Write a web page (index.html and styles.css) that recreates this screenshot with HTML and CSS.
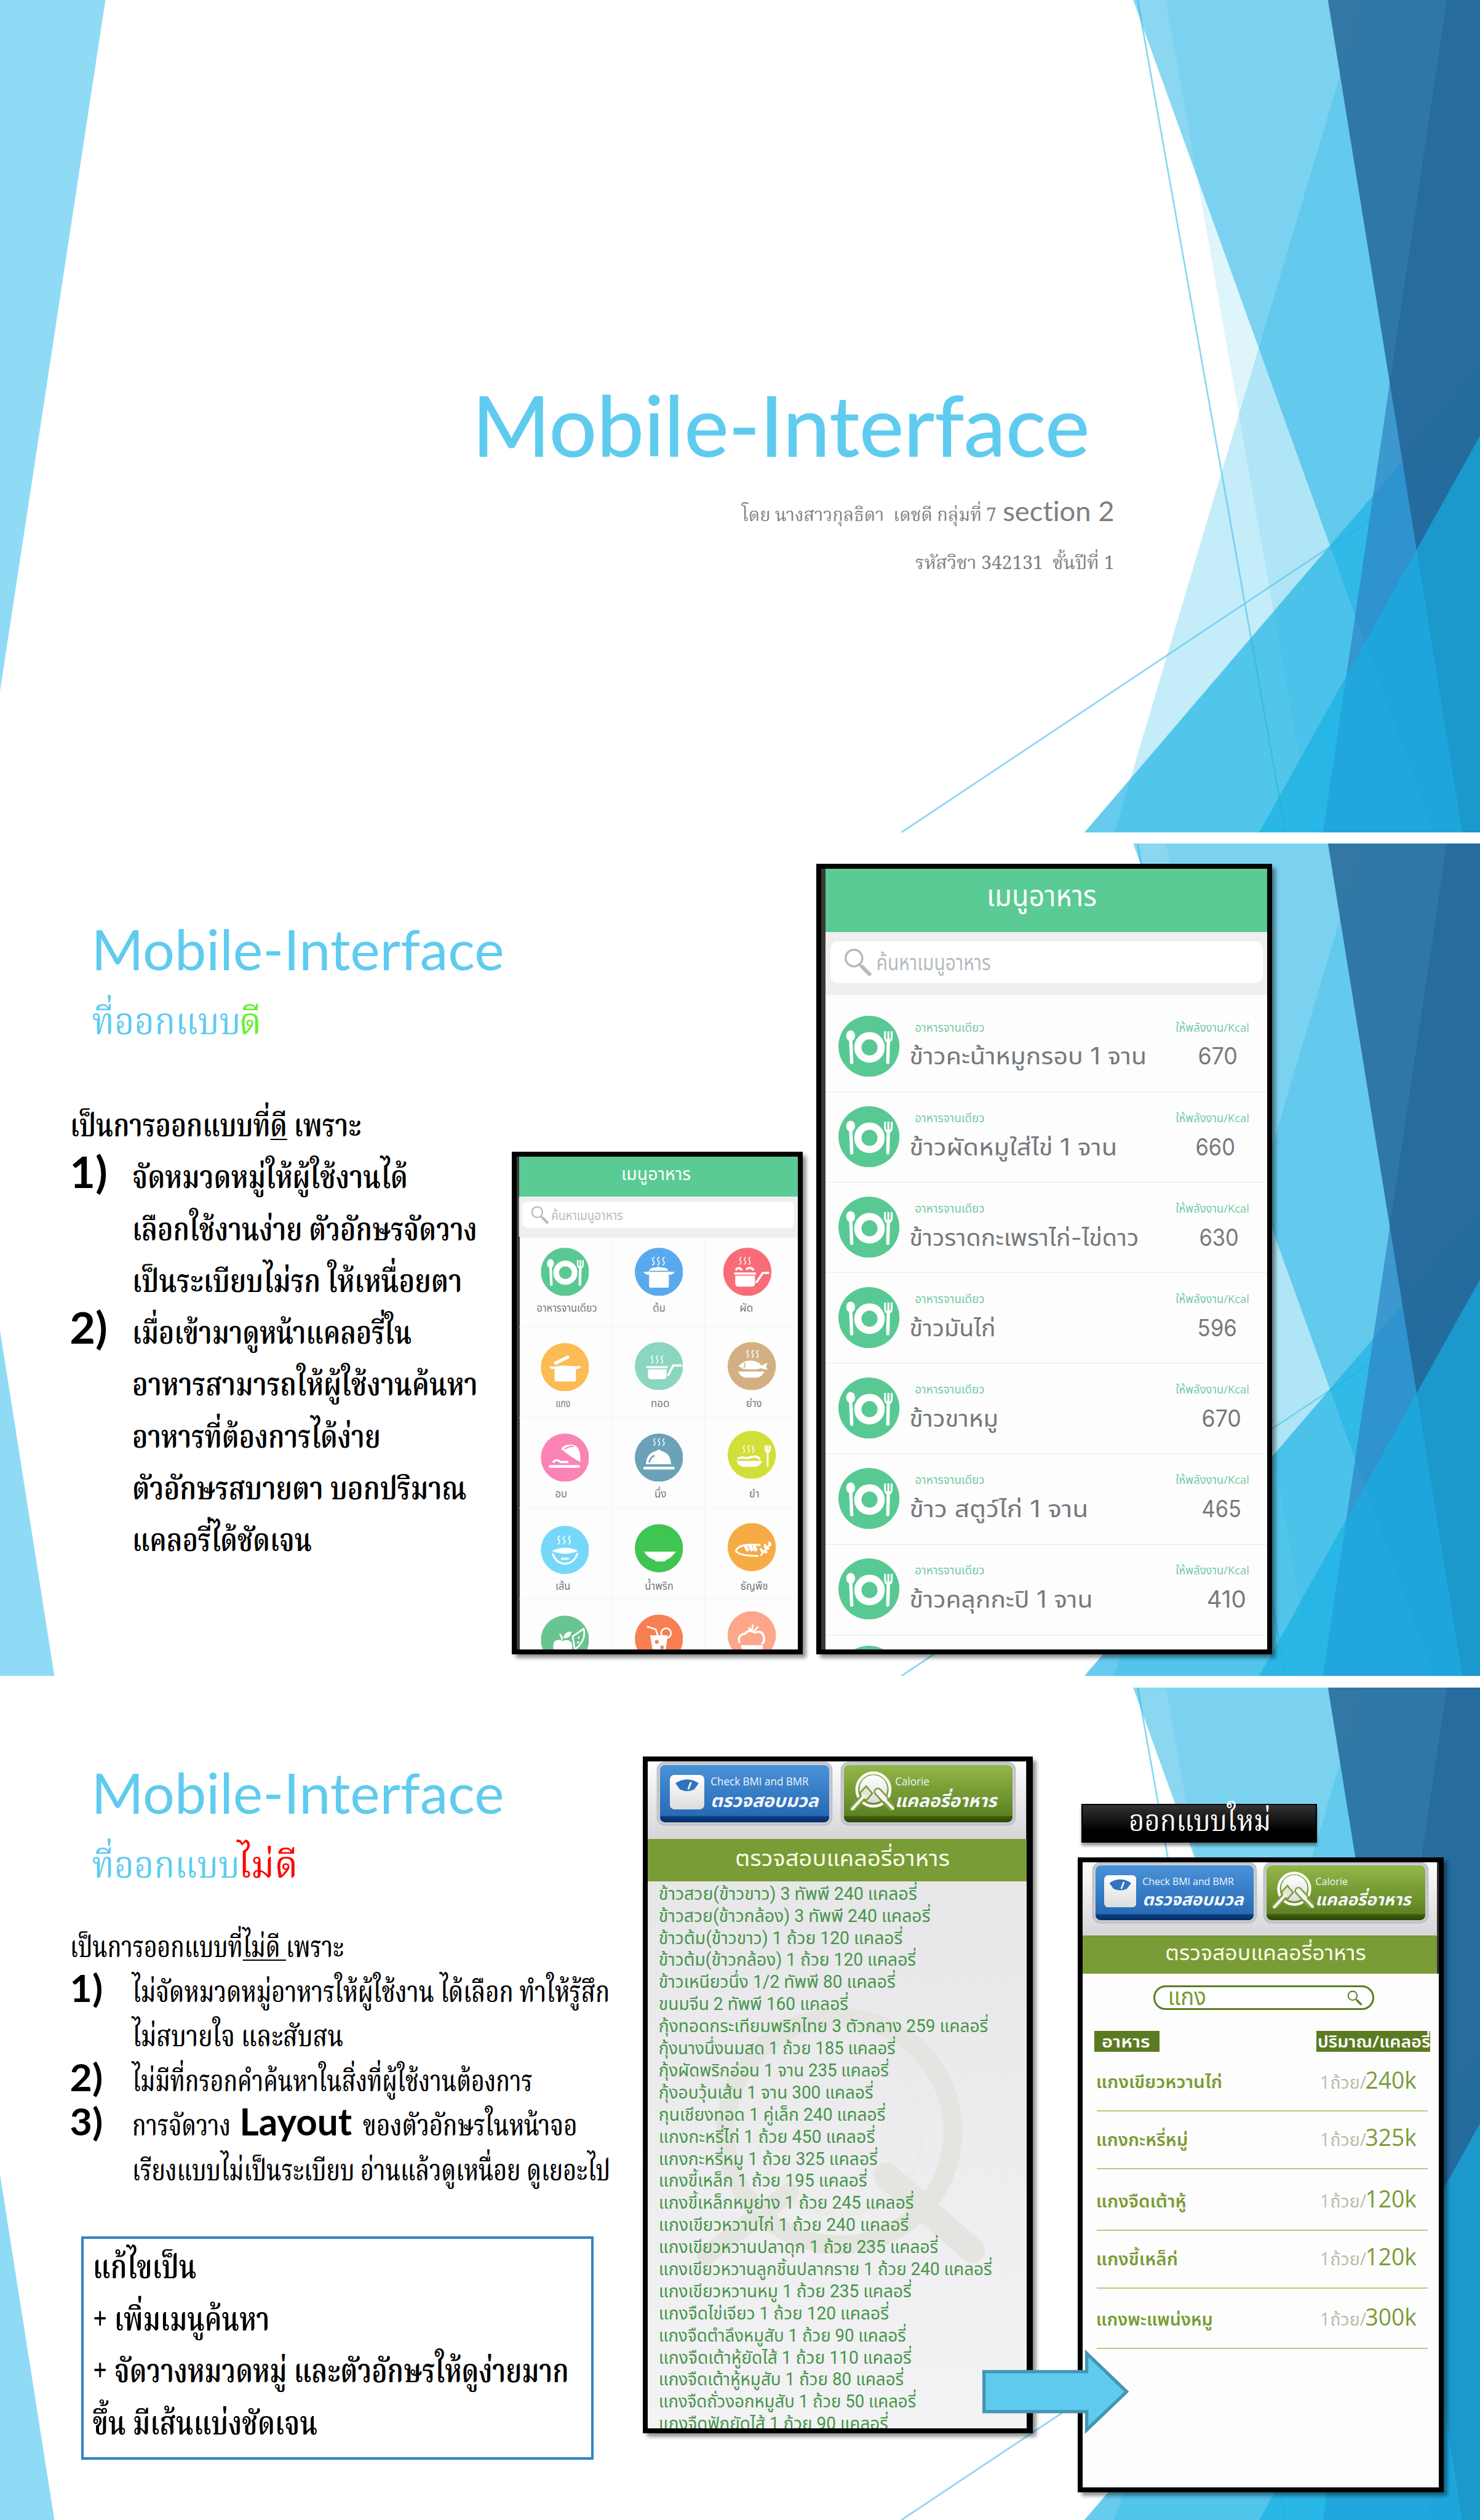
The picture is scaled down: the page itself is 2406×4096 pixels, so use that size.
FILE: index.html
```html
<!DOCTYPE html>
<html lang="th">
<head>
<meta charset="utf-8">
<title>Mobile-Interface</title>
<link rel="stylesheet" href="styles.css">
</head>
<body>
<svg class="defs" width="0" height="0" aria-hidden="true">
  <defs>
    <linearGradient id="gWhite" x1="0" y1="0" x2="0" y2="1"><stop offset="0" stop-color="#fff"/><stop offset="1" stop-color="#dcdcdc"/></linearGradient>
    <symbol id="facets" viewBox="0 0 2667 1500" preserveAspectRatio="none">
      <path d="M2050 0L2316.6 1500M1624 1500L2667 805" stroke="#5fcbef" stroke-opacity=".75" stroke-width="3" fill="none"/>
      <path d="M2455 0H2667V1500H2008Z" fill="#5fcbef" fill-opacity=".36"/>
      <path d="M2101 0H2667V1500H2365Z" fill="#5fcbef" fill-opacity=".2"/>
      <path d="M2667 667V1500H1954Z" fill="#17b0e4" fill-opacity=".66"/>
      <path d="M2042 0H2667V1500H2583Z" fill="#17b0e4" fill-opacity=".5"/>
      <path d="M2607 0H2667V1500H2384Z" fill="#2e83c3" fill-opacity=".7"/>
      <path d="M2393 0H2667V1500H2635Z" fill="#226292" fill-opacity=".8"/>
      <path d="M2667 785V1500H2269Z" fill="#17b0e4" fill-opacity=".66"/>
    </symbol>
    <symbol id="plate" viewBox="0 0 110 110">
      <circle cx="55" cy="55" r="55" fill="#58c993"/>
      <circle cx="56" cy="57" r="21" fill="none" stroke="#fff" stroke-width="13"/>
      <ellipse cx="22" cy="36" rx="8" ry="10" fill="#fff"/>
      <path d="M22 40L24 84" stroke="#fff" stroke-width="6" stroke-linecap="round"/>
      <path d="M84 28V38Q84 46 90 46Q96 46 96 38V28M90 28V46" stroke="#fff" stroke-width="3.5" fill="none"/>
      <path d="M90 44L89 84" stroke="#fff" stroke-width="6" stroke-linecap="round"/>
    </symbol>
    <symbol id="mag" viewBox="0 0 50 50">
      <circle cx="18" cy="18" r="15" fill="none" stroke="currentColor" stroke-width="4"/>
      <path d="M28 30L33 34" stroke="currentColor" stroke-width="4"/>
      <path d="M33 34L46 47" stroke="currentColor" stroke-width="7" stroke-linecap="round"/>
    </symbol>
    <symbol id="steam" viewBox="0 0 30 18">
      <path d="M6 1Q0 5 4 9T2 17M16 1Q10 5 14 9T12 17M26 1Q20 5 24 9T22 17" fill="none" stroke="#fff" stroke-width="2"/>
    </symbol>
    <symbol id="scale" viewBox="0 0 62 62">
      <rect width="62" height="62" rx="8" fill="url(#gWhite)"/>
      <path d="M10 15Q31 1 52 15L44 26Q31 32 18 26Z" fill="#2f74bd"/>
      <path d="M33 26L38 13" stroke="#fff" stroke-width="3"/>
    </symbol>
    <symbol id="dish" viewBox="0 0 80 72">
      <circle cx="42" cy="34" r="30" fill="none" stroke="#fff" stroke-width="5"/>
      <circle cx="42" cy="33" r="25" fill="url(#gWhite)"/>
      <path d="M4 69L25 46" stroke="#7d9c3c" stroke-width="12" stroke-linecap="round"/>
      <path d="M18 40L29 28L40 41L30 53L20 50Z" fill="#e3e6d4" stroke="#7d9c3c" stroke-width="3"/>
      <path d="M50 38L77 68" stroke="#7d9c3c" stroke-width="15" stroke-linecap="round"/>
      <path d="M4 69L25 46" stroke="#f4f4ee" stroke-width="5" stroke-linecap="round"/>
      <path d="M50 38L62 51" stroke="#f4f4ee" stroke-width="9" stroke-linecap="round"/>
      <path d="M60 50L77 68" stroke="#f4f4ee" stroke-width="5" stroke-linecap="round"/>
    </symbol>
  </defs>
</svg>

<main class="deck">
  <section class="slide cover">
    <svg class="bg"><use href="#facets"/><path d="M0 0H190L0 1245Z" fill="#8fdbf5"/></svg>
    <h1><span data-w="1105">Mobile-Interface</span></h1>
    <p class="by"><span class="th" data-w="456">โดย นางสาวกุลธิดา&nbsp; เดชดี กลุ่มที่ 7</span><span class="sec" data-w="197">section 2</span></p>
    <p class="by"><span class="th" data-w="356">รหัสวิชา 342131&nbsp; ชั้นปีที่ 1</span></p>
  </section>

  <section class="slide good">
    <svg class="bg"><use href="#facets"/><path d="M0 877L98 1500H0Z" fill="#8fdbf5"/></svg>
    <div class="copy">
      <h2><span data-w="736">Mobile-Interface</span></h2>
      <h2><span class="th" data-w="263">ที่ออกแบบ</span><span class="th lime" data-w="35">ดี</span></h2>
      <div class="body">
        <p class="ln"><span class="th" data-w="520">เป็นการออกแบบที่<u>ดี</u> เพราะ</span></p>
        <div class="item"><b data-w="62">1)</b><div>
          <p class="ln"><span class="th" data-w="492">จัดหมวดหมู่ให้ผู้ใช้งานได้</span></p>
          <p class="ln"><span class="th" data-w="617">เลือกใช้งานง่าย ตัวอักษรจัดวาง</span></p>
          <p class="ln"><span class="th" data-w="590">เป็นระเบียบไม่รก ให้เหนื่อยตา</span></p></div></div>
        <div class="item"><b data-w="62">2)</b><div>
          <p class="ln"><span class="th" data-w="499">เมื่อเข้ามาดูหน้าแคลอรี่ใน</span></p>
          <p class="ln"><span class="th" data-w="618">อาหารสามารถให้ผู้ใช้งานค้นหา</span></p>
          <p class="ln"><span class="th" data-w="443">อาหารที่ต้องการได้ง่าย</span></p>
          <p class="ln"><span class="th" data-w="598">ตัวอักษรสบายตา บอกปริมาณ</span></p>
          <p class="ln"><span class="th" data-w="319">แคลอรี่ได้ชัดเจน</span></p></div></div>
      </div>
    </div>

    <div class="phone menu">
      <header><span class="th" data-w="123">เมนูอาหาร</span></header>
      <div class="find"><div class="field"><svg><use href="#mag"/></svg><span class="th" data-w="127">ค้นหาเมนูอาหาร</span></div></div>
      <div class="cats">
        <div class="cat"><svg viewBox="0 0 110 110"><use href="#plate"/></svg><p style="--x:7px"><span data-w="107">อาหารจานเดียว</span></p></div>
        <div class="cat"><svg viewBox="0 0 88 88"><circle cx="44" cy="44" r="44" fill="#5aa9ee"/><use href="#steam" x="30" y="16" width="28" height="17"/><path d="M15 44H25L27 40Q29 36 40 36Q42 33 46 36Q58 36 60 40L62 44H73L68 49H62V70Q62 73 59 73H29Q26 73 26 70V49H21Z" fill="#fff"/><path d="M27 43H61" stroke="#5aa9ee" stroke-width="2"/></svg><p><span data-w="21">ต้ม</span></p></div>
        <div class="cat" style="--i:-7px"><svg viewBox="0 0 88 88"><circle cx="44" cy="44" r="44" fill="#f76c78"/><use href="#steam" x="28" y="16" width="25" height="16"/><path d="M23 41Q28 33 34 41M42 40Q48 33 56 41" stroke="#fff" stroke-width="4" fill="none"/><path d="M20 47H60M60 64L72 46H84" stroke="#fff" stroke-width="4" fill="none"/><path d="M22 51H58V66Q58 71 52 71H28Q22 71 22 66Z" fill="#fff"/></svg><p style="--x:-9px"><span data-w="23">ผัด</span></p></div>
        <div class="cat r2"><svg viewBox="0 0 88 88"><circle cx="44" cy="44" r="44" fill="#fdbb55"/><path d="M23 35L50 22L53 27L27 40Z" fill="#fff"/><path d="M15 43H24L38 41L60 42H74L69 47H64V67Q64 70 61 70H28Q25 70 25 67V47H19Z" fill="#fff"/></svg><p><span data-w="25">แกง</span></p></div>
        <div class="cat r2" style="--y:-2px"><svg viewBox="0 0 88 88"><circle cx="44" cy="44" r="44" fill="#8bd6c0"/><use href="#steam" x="28" y="24" width="27" height="16"/><path d="M21 46H60M60 62L70 43H86" stroke="#fff" stroke-width="4" fill="none"/><path d="M24 50H58V63Q58 68 50 68H32Q24 68 24 63Z" fill="#fff"/></svg><p style="--x:2px"><span data-w="32">ทอด</span></p></div>
        <div class="cat r2" style="--x:1px;--y:-2px"><svg viewBox="0 0 88 88"><circle cx="44" cy="44" r="44" fill="#d3b083"/><use href="#steam" x="33" y="14" width="27" height="16"/><path d="M20 44Q30 33 42 34Q54 34 62 43L73 38L70 45L73 51L60 48Q50 52 28 49Z" fill="#fff"/><path d="M30 38Q34 43 29 47" stroke="#d3b083" stroke-width="2" fill="none"/><path d="M19 54H67Q62 65 52 65H34Q24 65 19 54Z" fill="#fff"/></svg><p style="--x:5px"><span data-w="27">ย่าง</span></p></div>
        <div class="cat r3"><svg viewBox="0 0 88 88"><circle cx="44" cy="44" r="44" fill="#fb83b5"/><path d="M37 28Q44 18 60 21Q73 24 72 52Q56 44 37 28Z" fill="#fff"/><path d="M43 29Q52 22 60 24" stroke="#fb83b5" stroke-width="2" fill="none"/><path d="M22 53Q28 45 36 52L50 52" stroke="#fff" stroke-width="4" fill="none"/><path d="M17 60H69" stroke="#fff" stroke-width="5" stroke-linecap="round"/></svg><p style="--x:-3px"><span data-w="20">อบ</span></p></div>
        <div class="cat r3"><svg viewBox="0 0 88 88"><circle cx="44" cy="44" r="44" fill="#6ba2b7"/><use href="#steam" x="32" y="8" width="26" height="15"/><path d="M20 56Q22 35 39 32Q44 27 49 32Q66 37 66 56Z" fill="#fff"/><path d="M26 53Q28 43 36 40" stroke="#6ba2b7" stroke-width="3" fill="none"/><path d="M18 63H70" stroke="#fff" stroke-width="5" stroke-linecap="round"/></svg><p style="--x:3px"><span data-w="20">นึ่ง</span></p></div>
        <div class="cat r3" style="--x:1px;--y:-5px"><svg viewBox="0 0 88 88"><circle cx="44" cy="44" r="44" fill="#d2df39"/><use href="#steam" x="26" y="26" width="26" height="15"/><path d="M18 51Q26 47 34 50L44 48Q54 45 59 52" stroke="#fff" stroke-width="4" fill="none"/><path d="M16 55H63Q59 65 50 66H29Q20 65 16 55Z" fill="#fff"/><path d="M69 27V34Q69 39 73 39Q77 39 77 34V27M73 27V66" stroke="#fff" stroke-width="3" fill="none"/></svg><p style="--x:5px"><span data-w="17">ยำ</span></p></div>
        <div class="cat r4"><svg viewBox="0 0 88 88"><circle cx="44" cy="44" r="44" fill="#76d8f8"/><use href="#steam" x="29" y="14" width="29" height="24"/><path d="M20 46Q44 34 68 46Q44 56 20 46Z" fill="#fff"/><path d="M21 50Q28 69 44 69Q60 69 67 50" stroke="#fff" stroke-width="3.5" fill="none"/><path d="M37 60H51" stroke="#fff" stroke-width="4"/></svg><p><span data-w="25">เส้น</span></p></div>
        <div class="cat r4" style="--y:-3px"><svg viewBox="0 0 88 88"><circle cx="44" cy="44" r="44" fill="#3fc552"/><path d="M17 50H75Q64 64 57 65L55 68H38L36 65Q24 62 17 50Z" fill="#fff"/></svg><p><span data-w="50">น้ำพริก</span></p></div>
        <div class="cat r4" style="--x:1px;--y:-5px"><svg viewBox="0 0 88 88"><circle cx="44" cy="44" r="44" fill="#f5ac45"/><path d="M60 40Q46 39 35 40Q20 41 15 50Q18 60 56 60" stroke="#fff" stroke-width="3.5" fill="none"/><path d="M32 41L37 51M40 40L45 51M48 41L52 51" stroke="#fff" stroke-width="6"/><path d="M60 60L79 36" stroke="#fff" stroke-width="3"/><path d="M62 50L72 54M66 42L76 47M64 56L60 46M71 50L68 38M78 42L75 34" stroke="#fff" stroke-width="4"/></svg><p style="--x:5px"><span data-w="48">ธัญพืช</span></p></div>
        <div class="cat r5"><svg viewBox="0 0 88 88"><circle cx="44" cy="44" r="44" fill="#68c490"/><path d="M24 48Q30 42 40 46Q52 42 56 50Q60 60 52 74H28Q20 60 24 48Z" fill="#fff"/><path d="M39 44Q37 33 34 35M42 40Q46 30 54 31Q52 40 42 40" stroke="#fff" stroke-width="3" fill="#fff"/><path d="M58 38L78 24Q84 44 62 62Z" fill="#68c490" stroke="#fff" stroke-width="3"/><path d="M68 42L70 38M66 50L70 48" stroke="#fff" stroke-width="2.5"/></svg></div>
        <div class="cat r5" style="--y:-2px"><svg viewBox="0 0 88 88"><circle cx="44" cy="44" r="44" fill="#f87f52"/><path d="M22 22L38 27L44 44" stroke="#fff" stroke-width="3" fill="none"/><circle cx="57" cy="34" r="9" stroke="#fff" stroke-width="3" fill="none"/><path d="M28 38H60L55 74H34Z" fill="#fff"/><path d="M36 48L42 46L44 52L38 54ZM46 58L52 56L53 62L48 64Z" fill="#f87f52"/></svg></div>
        <div class="cat r5" style="--x:1px;--y:-8px"><svg viewBox="0 0 88 88"><circle cx="44" cy="44" r="44" fill="#fca68a"/><path d="M22 58Q16 44 32 41Q38 32 50 39Q64 34 66 48Q68 56 62 60" fill="none" stroke="#fff" stroke-width="4"/><path d="M44 38L46 24M38 30L44 36M56 28L48 36" stroke="#fff" stroke-width="3"/><path d="M24 62H64V76H28Z" fill="#fff"/></svg></div>
      </div>
    </div>

    <div class="phone dishes">
      <header><span class="th" data-w="194">เมนูอาหาร</span></header>
      <div class="find"><div class="field"><svg><use href="#mag"/></svg><span class="th" data-w="203">ค้นหาเมนูอาหาร</span></div></div>
      <div class="rows">
        <div class="row"><svg><use href="#plate"/></svg><div class="name"><small data-w="124">อาหารจานเดียว</small><span data-w="424">ข้าวคะน้าหมูกรอบ 1 จาน</span></div><div class="kcal"><small data-w="131">ให้พลังงาน/Kcal</small><span data-w="68" style="--x:0px">670</span></div></div>
        <div class="row"><svg><use href="#plate"/></svg><div class="name"><small data-w="124">อาหารจานเดียว</small><span data-w="371">ข้าวผัดหมูใส่ไข่ 1 จาน</span></div><div class="kcal"><small data-w="131">ให้พลังงาน/Kcal</small><span data-w="68" style="--x:-5px">660</span></div></div>
        <div class="row"><svg><use href="#plate"/></svg><div class="name"><small data-w="124">อาหารจานเดียว</small><span data-w="410">ข้าวราดกะเพราไก่-ไข่ดาว</span></div><div class="kcal"><small data-w="131">ให้พลังงาน/Kcal</small><span data-w="68" style="--x:2px">630</span></div></div>
        <div class="row"><svg><use href="#plate"/></svg><div class="name"><small data-w="124">อาหารจานเดียว</small><span data-w="152">ข้าวมันไก่</span></div><div class="kcal"><small data-w="131">ให้พลังงาน/Kcal</small><span data-w="68" style="--x:-2px">596</span></div></div>
        <div class="row"><svg><use href="#plate"/></svg><div class="name"><small data-w="124">อาหารจานเดียว</small><span data-w="157">ข้าวขาหมู</span></div><div class="kcal"><small data-w="131">ให้พลังงาน/Kcal</small><span data-w="68" style="--x:6px">670</span></div></div>
        <div class="row"><svg><use href="#plate"/></svg><div class="name"><small data-w="124">อาหารจานเดียว</small><span data-w="319">ข้าว สตูว์ไก่ 1 จาน</span></div><div class="kcal"><small data-w="131">ให้พลังงาน/Kcal</small><span data-w="68" style="--x:6px">465</span></div></div>
        <div class="row"><svg><use href="#plate"/></svg><div class="name"><small data-w="124">อาหารจานเดียว</small><span data-w="327">ข้าวคลุกกะปิ 1 จาน</span></div><div class="kcal"><small data-w="131">ให้พลังงาน/Kcal</small><span data-w="68" style="--x:15px">410</span></div></div>
        <div class="row"><svg><use href="#plate"/></svg></div>
      </div>
    </div>
  </section>

  <section class="slide bad">
    <svg class="bg"><use href="#facets"/><path d="M0 877L98 1500H0Z" fill="#8fdbf5"/></svg>
    <div class="copy">
      <h2><span data-w="736">Mobile-Interface</span></h2>
      <h2><span class="th" data-w="261">ที่ออกแบบ</span><span class="th red" data-w="103">ไม่ดี</span></h2>
      <div class="body">
        <p class="ln"><span class="th" data-w="489">เป็นการออกแบบที่<u>ไม่ดี </u>เพราะ</span></p>
        <div class="item"><b data-w="54">1)</b><div>
          <p class="ln"><span class="th" data-w="856">ไม่จัดหมวดหมู่อาหารให้ผู้ใช้งาน ได้เลือก ทำให้รู้สึก</span></p>
          <p class="ln"><span class="th" data-w="376">ไม่สบายใจ และสับสน</span></p></div></div>
        <div class="item"><b data-w="54">2)</b><div>
          <p class="ln"><span class="th" data-w="717">ไม่มีที่กรอกคำค้นหาในสิ่งที่ผู้ใช้งานต้องการ</span></p></div></div>
        <div class="item"><b data-w="54">3)</b><div>
          <p class="ln"><span class="th" data-w="173">การจัดวาง</span><b class="lay" data-w="197">Layout</b><span class="th" data-w="382">ของตัวอักษรในหน้าจอ</span></p>
          <p class="ln"><span class="th" data-w="857">เรียงแบบไม่เป็นระเบียบ อ่านแล้วดูเหนื่อย ดูเยอะไป</span></p></div></div>
      </div>
      <div class="fix">
        <p><span data-w="182">แก้ไขเป็น</span></p>
        <p><span data-w="314">+ เพิ่มเมนูค้นหา</span></p>
        <p><span data-w="853">+ จัดวางหมวดหมู่ และตัวอักษรให้ดูง่ายมาก</span></p>
        <p><span data-w="400">ขึ้น มีเส้นแบ่งชัดเจน</span></p>
      </div>
    </div>

    <div class="phone old">
      <div class="tools">
        <div class="btn blue"><svg><use href="#scale"/></svg><div><p><span data-w="175">Check BMI and BMR</span></p><p class="big"><span data-w="192">ตรวจสอบมวล</span></p></div></div>
        <div class="btn green"><svg><use href="#dish"/></svg><div><p><span data-w="60">Calorie</span></p><p class="big"><span data-w="181">แคลอรี่อาหาร</span></p></div></div>
      </div>
      <div class="bar"><span data-w="384">ตรวจสอบแคลอรี่อาหาร</span></div>
      <div class="list">
        <svg class="mark" viewBox="0 0 679 985"><g fill="none" stroke="#e4e5e0"><circle cx="345" cy="450" r="205" stroke-width="34"/><circle cx="345" cy="450" r="150" stroke-width="10" stroke="#ebebeb"/><path d="M430 530L585 665" stroke-width="46" stroke-linecap="round"/><path d="M255 560L105 675" stroke-width="34" stroke-linecap="round"/></g></svg>
        <p><span data-w="463">ข้าวสวย(ข้าวขาว) 3 ทัพพี 240 แคลอรี่</span></p>
        <p><span data-w="487">ข้าวสวย(ข้าวกล้อง) 3 ทัพพี 240 แคลอรี่</span></p>
        <p><span data-w="437">ข้าวต้ม(ข้าวขาว) 1 ถ้วย 120 แคลอรี่</span></p>
        <p><span data-w="461">ข้าวต้ม(ข้าวกล้อง) 1 ถ้วย 120 แคลอรี่</span></p>
        <p><span data-w="424">ข้าวเหนียวนึ่ง 1/2 ทัพพี 80 แคลอรี่</span></p>
        <p><span data-w="339">ขนมจีน 2 ทัพพี 160 แคลอรี่</span></p>
        <p><span data-w="591">กุ้งทอดกระเทียมพริกไทย 3 ตัวกลาง 259 แคลอรี่</span></p>
        <p><span data-w="424">กุ้งนางนึ่งนมสด 1 ถ้วย 185 แคลอรี่</span></p>
        <p><span data-w="412">กุ้งผัดพริกอ่อน 1 จาน 235 แคลอรี่</span></p>
        <p><span data-w="384">กุ้งอบวุ้นเส้น 1 จาน 300 แคลอรี่</span></p>
        <p><span data-w="406">กุนเชียงทอด 1 คู่เล็ก 240 แคลอรี่</span></p>
        <p><span data-w="387">แกงกะหรี่ไก่ 1 ถ้วย 450 แคลอรี่</span></p>
        <p><span data-w="392">แกงกะหรี่หมู 1 ถ้วย 325 แคลอรี่</span></p>
        <p><span data-w="373">แกงขี้เหล็ก 1 ถ้วย 195 แคลอรี่</span></p>
        <p><span data-w="457">แกงขี้เหล็กหมูย่าง 1 ถ้วย 245 แคลอรี่</span></p>
        <p><span data-w="448">แกงเขียวหวานไก่ 1 ถ้วย 240 แคลอรี่</span></p>
        <p><span data-w="501">แกงเขียวหวานปลาดุก 1 ถ้วย 235 แคลอรี่</span></p>
        <p><span data-w="598">แกงเขียวหวานลูกชิ้นปลากราย 1 ถ้วย 240 แคลอรี่</span></p>
        <p><span data-w="453">แกงเขียวหวานหมู 1 ถ้วย 235 แคลอรี่</span></p>
        <p><span data-w="412">แกงจืดไข่เจียว 1 ถ้วย 120 แคลอรี่</span></p>
        <p><span data-w="443">แกงจืดตำลึงหมูสับ 1 ถ้วย 90 แคลอรี่</span></p>
        <p><span data-w="453">แกงจืดเต้าหู้ยัดไส้ 1 ถ้วย 110 แคลอรี่</span></p>
        <p><span data-w="439">แกงจืดเต้าหู้หมูสับ 1 ถ้วย 80 แคลอรี่</span></p>
        <p><span data-w="461">แกงจืดถั่วงอกหมูสับ 1 ถ้วย 50 แคลอรี่</span></p>
        <p><span data-w="411">แกงจืดฟักยัดไส้ 1 ถ้วย 90 แคลอรี่</span></p>
      </div>
    </div>

    <div class="redo">
      <div class="badge"><span data-w="252">ออกแบบใหม่</span></div>
      <div class="phone new">
        <div class="tools">
          <div class="btn blue"><svg><use href="#scale"/></svg><div><p><span data-w="163">Check BMI and BMR</span></p><p class="big"><span data-w="180">ตรวจสอบมวล</span></p></div></div>
          <div class="btn green"><svg><use href="#dish"/></svg><div><p><span data-w="57">Calorie</span></p><p class="big"><span data-w="170">แคลอรี่อาหาร</span></p></div></div>
        </div>
        <div class="bar"><span data-w="359">ตรวจสอบแคลอรี่อาหาร</span></div>
        <div class="pill"><span data-w="66">แกง</span><svg><use href="#mag"/></svg></div>
        <div class="heads"><div><span data-w="85">อาหาร</span></div><div><span data-w="201">ปริมาณ/แคลอรี่</span></div></div>
        <div class="food"><span data-w="225">แกงเขียวหวานไก่</span><div><i data-w="81">1ถ้วย/</i><em data-w="89">240k</em></div></div>
        <div class="food"><span data-w="163">แกงกะหรี่หมู่</span><div><i data-w="81">1ถ้วย/</i><em data-w="89">325k</em></div></div>
        <div class="food tall"><span data-w="160">แกงจืดเต้าหู้</span><div><i data-w="81">1ถ้วย/</i><em data-w="89">120k</em></div></div>
        <div class="food"><span data-w="145">แกงขี้เหล็ก่</span><div><i data-w="81">1ถ้วย/</i><em data-w="89">120k</em></div></div>
        <div class="food last"><span data-w="208">แกงพะแพน่งหมู</span><div><i data-w="81">1ถ้วย/</i><em data-w="89">300k</em></div></div>
      </div>
    </div>
    <svg class="arrow" viewBox="0 0 264 156"><path d="M3 42H188V9L260 78L188 147V114H3Z" fill="#5fcbef" stroke="#4596b2" stroke-width="6"/></svg>
  </section>
</main>
<script src="fit.js"></script>
</body>
</html>
```
FILE: styles.css
```css
* { box-sizing: border-box; margin: 0; padding: 0; }
body { background: #fff; font-family: "Open Sans", "Noto Sans Thai", sans-serif; overflow: hidden; font-variant-ligatures: none; }
.defs { position: absolute; }
.deck { zoom: 0.90215; width: 2667px; height: 4540px; display: flex; flex-direction: column; gap: 20px; }
.slide { position: relative; height: 1500px; flex: none; overflow: hidden; display: flex; align-items: flex-start; }
.slide > * { position: relative; flex: none; }
.slide > .bg { position: absolute; left: 0; top: 0; width: 2667px; height: 1500px; }
[data-w] { display: inline-block; line-height: 0; white-space: nowrap; transform-origin: 0 50%; }

.cover { flex-direction: column; align-items: flex-end; padding: 675px 661px 0 0; }
h1, h2, .by, .body { font-family: "Lato", "Open Sans", sans-serif; }
h1 { font-size: 150px; line-height: 180px; font-weight: 400; color: #5fcbef; margin: 0 46px 22px 0; white-space: nowrap; -webkit-text-stroke: 1px #5fcbef; }
.by { font-size: 50px; line-height: 86px; color: #7f7f7f; white-space: nowrap; }
.by .th { font-size: 34px; font-family: "Noto Serif Thai", "Norasi", "Kinnari", "Open Sans", serif; }
.sec { margin-left: 15px; }

.copy { padding: 133px 0 0 168px; }
.good .copy { width: 922px; }
.bad .copy { width: 1158px; }
h2 { height: 115px; font-size: 100px; line-height: 115px; font-weight: 400; color: #5fcbef; white-space: nowrap; }
h2 .th { font-size: 67px; margin-right: 2px; }
.copy .th, .fix, .badge { font-family: "Noto Serif Thai", "Norasi", "Kinnari", "Open Sans", serif; }
h2 .lime { color: #66f22f; }
h2 .red { color: #f00; }
.body { margin: 88px 0 0 -39px; font-size: 78px; line-height: 93.4px; color: #000; }
.bad .body { margin-top: 58px; font-size: 67px; line-height: 80.4px; }
.ln { height: 1lh; white-space: nowrap; }
.ln .th { font-size: 58px; font-weight: 600; }
.bad .ln .th { font-size: 53px; font-weight: 500; }
.item { display: flex; }
.item > b { flex: none; margin-right: 49px; line-height: inherit; font-weight: 700; }
.bad .item > b { margin-right: 57px; }
u { text-decoration-thickness: 2px; text-underline-offset: 4px; }
.lay { margin: 0 24px 0 22px; font-weight: 700; }
.fix { width: 924px; height: 402px; margin: 86px 0 0 -22px; border: 5px solid #2e83c3; padding: 9px 0 0 19px; font-size: 60px; line-height: 93.7px; font-weight: 600; background: #fff; }
.fix p { height: 1lh; }

.phone { border: 9px solid #000; background: #fdfdfd; overflow: hidden; box-shadow: 7px 7px 7px rgba(0,0,0,.45); display: flex; flex-direction: column; }
.menu, .dishes { color: #75797d; }
.menu { width: 524px; height: 906px; margin-top: 555px; background: linear-gradient(90deg, #3c3c3c 5px, #fdfdfd 5px); padding-left: 5px; }
.menu header { flex: none; height: 72px; background: #5acb95; color: #fff; text-align: center; font-size: 36px; line-height: 58px; padding-right: 9px; }
.menu header span { font-size: 31px; }
.find { flex: none; background: #f0efef; }
.menu .find { height: 72px; padding: 9px 6px 15px 5px; box-shadow: 0 1px 3px #ccc; }
.field { display: flex; align-items: center; height: 48px; border-radius: 10px; background: #fff; color: #b4bbc0; }
.menu .field { padding-left: 16px; font-size: 24px; line-height: 46px; }
.menu .field svg { width: 32px; height: 34px; margin-right: 6px; }
.field span { line-height: inherit; }
.cats { display: grid; grid-template-columns: 169px 166px 166px; grid-template-rows: 163.5px 164px 163px 163px 163px; flex: none; }
.cat { border-right: 2px solid #f3f3f3; border-bottom: 2px solid #f3f3f3; padding-top: 20px; text-align: center; }
.cat:nth-child(3n) { border-right: 0; }
.cat.r2 { padding-top: 28px; }
.cat.r3 { padding-top: 27px; }
.cat.r4 { padding-top: 31px; }
.cat.r5 { padding-top: 30px; }
.cat svg { display: block; width: 87px; height: 87px; margin: 0 auto; transform: translate(var(--i, var(--x, 0)), var(--y, 0)); }
.cat:nth-child(3n+1) svg { transform: translateX(-2px); }
.cat:nth-child(3n+1) p { position: relative; left: -5px; }
.cat p { margin-top: 5px; height: 32px; font-size: 20px; line-height: 32px; transform: translateX(var(--x, 0)); }

.dishes { width: 821px; height: 1425px; margin: 36px 0 0 25px; background: linear-gradient(90deg, #3a3a38 8px, #fdfdfd 8px); padding-left: 8px; }
.dishes header { flex: none; height: 114px; background: #5acb95; color: #fff; text-align: center; font-size: 54px; line-height: 94px; padding-right: 17px; }
.dishes .find { height: 114px; padding: 17px 8px 22px 9px; }
.dishes .field { height: 75px; border-radius: 14px; padding-left: 24px; font-size: 40px; line-height: 68px; }
.dishes .field svg { width: 50px; height: 50px; margin-right: 10px; }
.row { flex: none; display: flex; height: 163px; border-bottom: 2px solid #e8e8e8; padding: 25px 0 0 23px; }
.row:first-child { height: 175px; padding-top: 37px; }
.row:last-child { padding-top: 19px; }
.row > svg { width: 110px; height: 110px; flex: none; }
.row div { display: flex; flex-direction: column; align-items: flex-start; }
.row small { font-size: 21px; line-height: 44px; margin-left: 9px; color: #74cba2; }
.row .name { margin-left: 20px; width: 479px; }
.row .kcal small { margin-left: 0; }
.row div span { font-size: 42px; line-height: 58px; height: 58px; font-family: "Inter", "Noto Sans Thai", sans-serif; }
.row .kcal span { margin-left: 41px; position: relative; left: var(--x); }

.old { width: 703px; height: 1219px; margin-top: 125px; border-right-width: 12px; background: #ececed; }
.tools { flex: none; display: flex; background: linear-gradient(#fdfdfd, #d6d6da); }
.old .tools { height: 139px; padding: 6px 0 0 23px; gap: 27px; border-right: 2px solid #3a3a3a; }
.btn { display: flex; border-radius: 9px; box-shadow: 0 0 0 3px #c9ccd2, 0 0 0 6px #bfc1c6; color: #f2f5fa; }
.btn.blue { background: linear-gradient(#4a92d8, #276bb5 88%, #0b3f83 90%, #052c66); }
.btn.green { background: linear-gradient(#93b748, #5e8222 88%, #3f5f0c 90%, #2c4405); }
.old .btn { width: 304px; height: 104px; padding: 18px 0 0 17px; }
.btn svg { flex: none; }
.old .btn.blue svg { width: 62px; height: 62px; margin-right: 13px; }
.old .btn.green svg { width: 80px; height: 72px; margin: -8px 2px 0 -6px; }
.btn p { font-size: 20px; line-height: 24px; height: 24px; }
.btn p.big { font-size: 32px; line-height: 42px; height: 42px; font-style: italic; font-weight: 700; }
.bar { flex: none; background: #7a9c36; color: #fafde8; text-align: center; }
.old .bar { height: 77px; font-size: 40px; line-height: 67px; }
.list { position: relative; flex: none; height: 985px; padding: 0 0 0 21px; color: #45964a; font-family: "Roboto", "Noto Sans Thai", sans-serif; font-size: 32px; line-height: 39.8px; background: linear-gradient(#e7e7e9, #f3f2f4); }
.list p { position: relative; height: 39.8px; top: 3px; white-space: nowrap; }
.list .mark { position: absolute; left: 0; top: 0; width: 679px; height: 985px; }

.redo { margin-left: 81px; padding-top: 210px; }
.badge { margin-left: 7px; width: 424px; height: 70px; border: 3px solid #000; background: linear-gradient(#333, #000 70%); box-shadow: 0 5px 5px rgba(0,0,0,.4); color: #fff; text-align: center; font-size: 54px; line-height: 66px; padding-left: 2px; }
.new { width: 660px; height: 1143px; margin-top: 27px; }
.new .tools { height: 131px; padding: 5px 0 0 23px; gap: 24px; border-right: 4px solid #333; }
.new .btn { width: 285px; height: 99px; padding: 18px 0 0 16px; }
.new .btn.blue svg { width: 58px; height: 58px; margin-right: 12px; }
.new .btn.green svg { width: 76px; height: 68px; margin: -8px 2px 0 -6px; }
.new .btn p { font-size: 19px; line-height: 22px; height: 22px; }
.new .btn p.big { font-size: 30px; line-height: 41px; height: 41px; }
.new .bar { height: 69px; font-size: 37px; line-height: 58px; border-top: 2px solid #6c9210; border-right: 4px solid #333; }
.pill { flex: none; width: 397px; height: 45px; margin: 21px 0 0 128px; border: 4px solid #5c7d22; border-radius: 23px; display: flex; align-items: center; justify-content: space-between; padding: 0 14px 0 24px; color: #7a9c36; font-size: 44px; background: #fff; }
.pill svg { width: 34px; height: 27px; color: #5c7d22; }
.pill span { position: relative; top: -3px; }
.heads { flex: none; display: flex; justify-content: space-between; margin: 37px 16px 0 21px; height: 38px; color: #fff; font-size: 29px; line-height: 38px; font-weight: 600; }
.heads div { background: #5c7a22; padding: 0 1px 0 3px; }
.heads div:first-child { width: 118px; padding-left: 14px; }
.food { flex: none; display: flex; justify-content: space-between; align-items: flex-end; height: 104px; margin: 0 20px 0 25px; padding: 0 22px 32px 1px; border-bottom: 3px solid #b3cc7f; color: #7a9c36; font-size: 32px; line-height: 40px; font-weight: 600; }
.heads + .food { height: 108px; }
.food.tall { height: 111px; }
.food.last { height: 108.5px; }
.food div { display: flex; height: 40px; }
.food > span, .food i, .food em { line-height: 40px; }
.food i, .food em { font-style: normal; font-weight: 400; }
.food i { color: #b9bdaa; margin-right: 1px; }
.food em { font-size: 43px; line-height: 32px; font-weight: 500; }
.slide > .arrow { position: absolute; left: 1770px; top: 1191px; width: 264px; height: 156px; }
```
FILE: fit.js
```js
// Stretches every label to the width given in its data-w attribute,
// letting the side bearings of the first and last glyph hang outside it.
(function () {
  var unit = document.querySelector('.deck').getBoundingClientRect().width / 2667;
  document.querySelectorAll('[data-w]').forEach(function (el) {
    var target = parseFloat(el.dataset.w);
    el.style.width = 'max-content';
    var natural = el.getBoundingClientRect().width / unit;
    var pad = Math.min(parseFloat(getComputedStyle(el).fontSize) * 0.04, 4);
    el.style.width = target + 'px';
    el.style.transform = 'translateX(' + -pad + 'px) scaleX(' + ((target + 2 * pad) / natural).toFixed(4) + ')';
  });
})();
```
